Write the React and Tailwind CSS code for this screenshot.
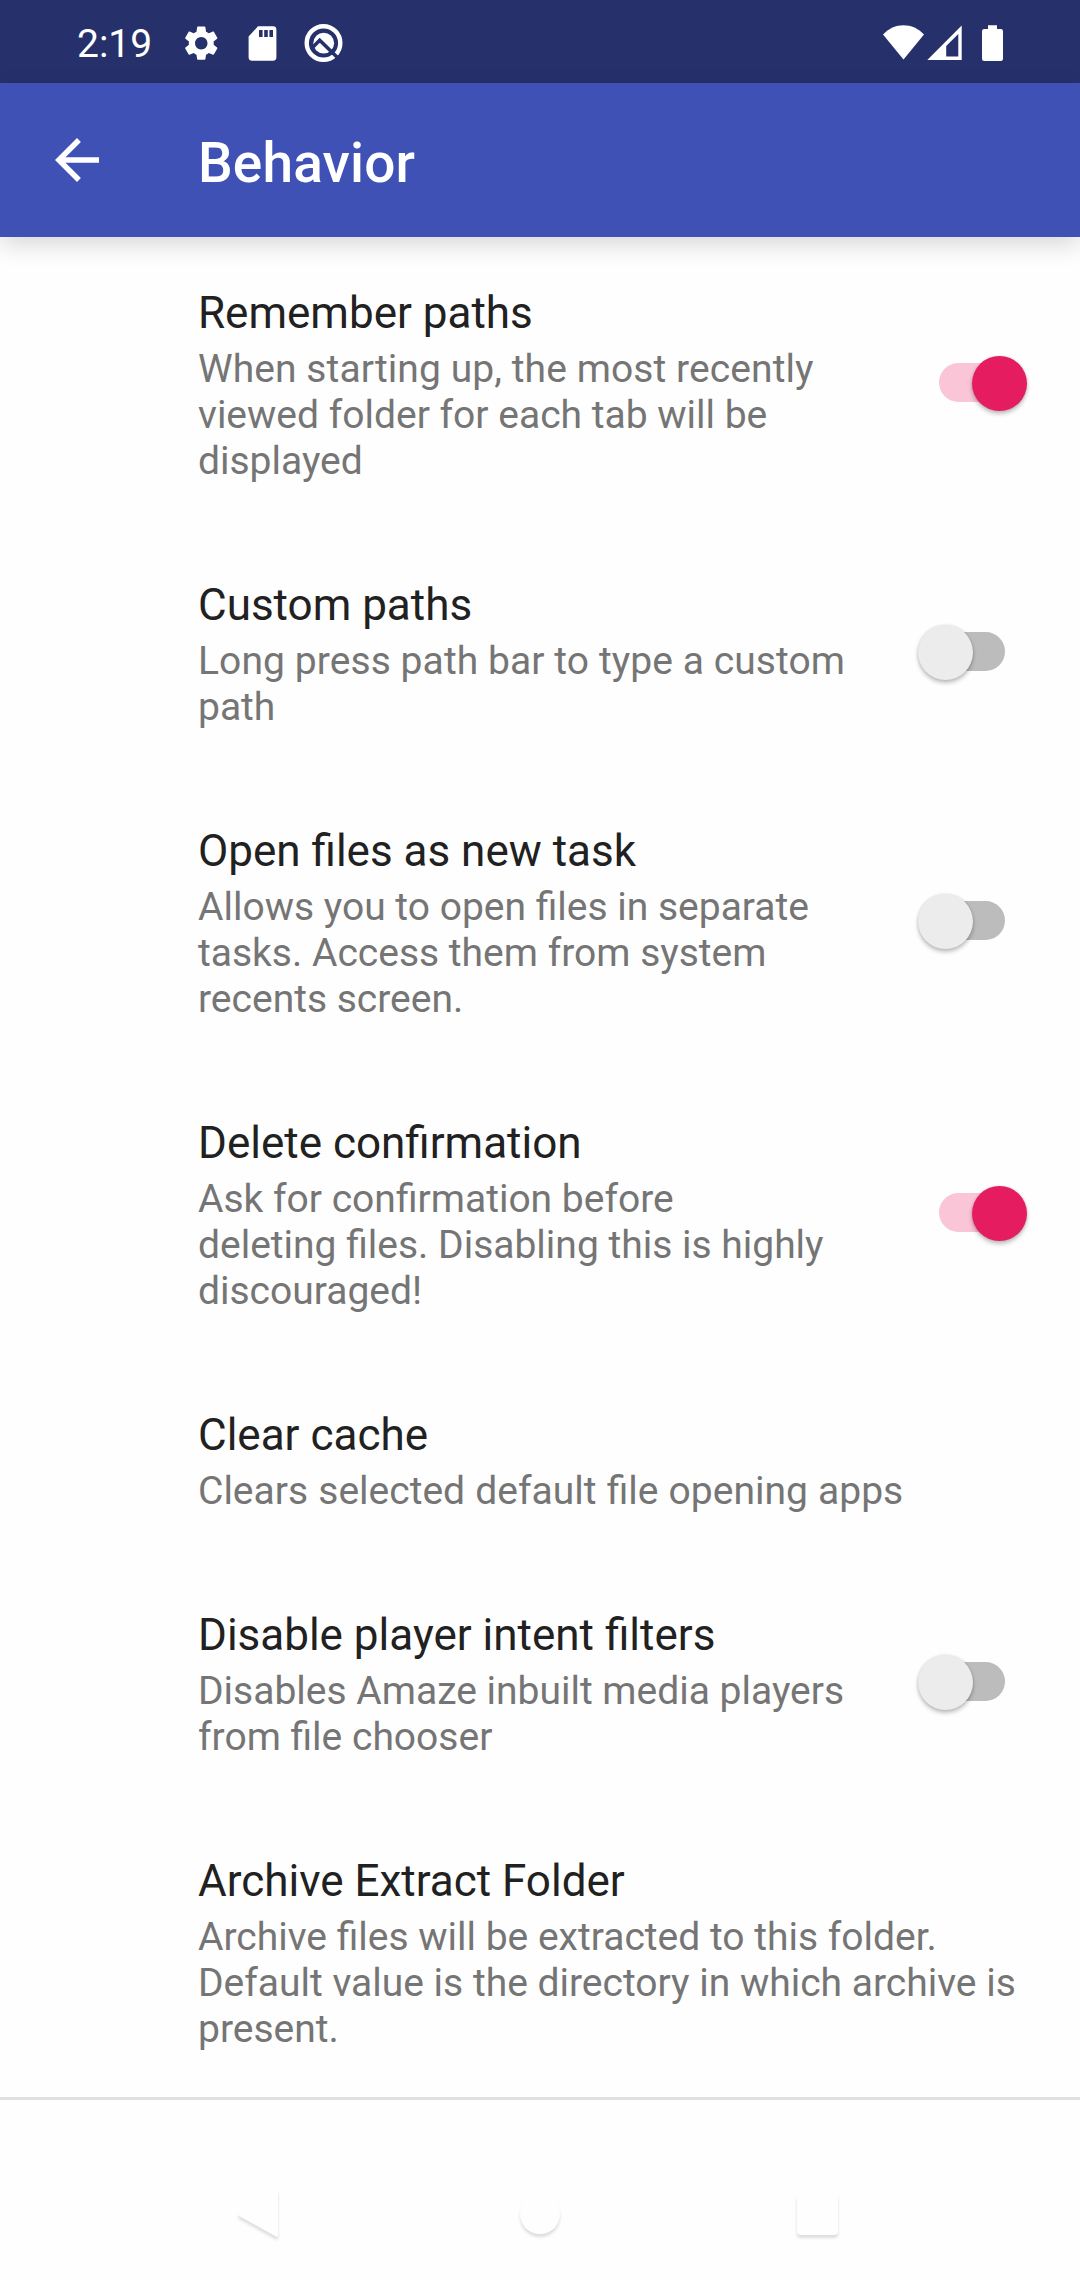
const items = [
  { title: "Remember paths", lines: ["When starting up, the most recently", "viewed folder for each tab will be", "displayed"], on: true, firstLine: "tracking-[0.08px]" },
  { title: "Custom paths", lines: ["Long press path bar to type a custom", "path"], on: false, firstLine: "tracking-[0.08px]" },
  { title: "Open files as new task", lines: ["Allows you to open files in separate", "tasks. Access them from system", "recents screen."], on: false },
  { title: "Delete confirmation", lines: ["Ask for confirmation before", "deleting files. Disabling this is highly", "discouraged!"], on: true },
  { title: "Clear cache", lines: ["Clears selected default file opening apps"], firstLine: "[word-spacing:0.5px]" },
  { title: "Disable player intent filters", lines: ["Disables Amaze inbuilt media players", "from file chooser"], on: false },
  { title: "Archive Extract Folder", lines: ["Archive files will be extracted to this folder.", "Default value is the directory in which archive is", "present."] },
];

function Switch({ on }) {
  return (
    <div className={`relative mb-px h-[39px] w-[66px] shrink-0 rounded-full ${on ? "bg-[#f9c5d7]" : "bg-[#bcbcbc]"}`}>
      <div
        className={`absolute -top-[7.5px] h-[55px] w-[55px] rounded-full shadow-[0_3px_4px_rgba(0,0,0,0.24),0_0_3px_rgba(0,0,0,0.12)] ${
          on ? "left-[32.5px] bg-[#e51d60]" : "-left-[21.5px] bg-[#ececec]"
        }`}
      />
    </div>
  );
}

function Row({ item }) {
  return (
    <div className="flex items-center justify-between pr-[75px] pl-[198px]">
      <div className="pt-[46px] pb-[45px] whitespace-nowrap">
        <div className="text-[44px] leading-[60px] text-[#212121]">{item.title}</div>
        <div className="mt-[3px] text-[39px] leading-[46px] text-[#757575]">
          {item.lines.map((l, i) => (
            <div key={l} className={i === 0 ? item.firstLine : undefined}>
              {l}
            </div>
          ))}
        </div>
      </div>
      {item.on !== undefined && <Switch on={item.on} />}
    </div>
  );
}

function StatusBar() {
  return (
    <div className="flex h-[83px] items-center bg-[#26306b] pl-[77px] text-white">
      <div className="w-[100px] text-[39px] leading-[46px] pt-[5px]">2:19</div>
      <svg className="h-[83px] w-[903px]" viewBox="177 0 903 83" fill="#fff">
        <g transform="translate(180.5 22.4) scale(1.73)">
          <path d="M19.14 12.94c.04-.3.06-.61.06-.94 0-.32-.02-.64-.07-.94l2.03-1.58c.18-.14.23-.41.12-.61l-1.92-3.32c-.12-.22-.37-.29-.59-.22l-2.39.96c-.5-.38-1.03-.7-1.62-.94l-.36-2.54c-.04-.24-.24-.41-.48-.41h-3.84c-.24 0-.43.17-.47.41l-.36 2.54c-.59.24-1.13.57-1.62.94l-2.39-.96c-.22-.08-.47 0-.59.22L2.74 8.87c-.12.21-.08.47.12.61l2.03 1.58c-.05.3-.09.63-.09.94s.02.64.07.94l-2.03 1.58c-.18.14-.23.41-.12.61l1.92 3.32c.12.22.37.29.59.22l2.39-.96c.5.38 1.03.7 1.62.94l.36 2.54c.05.24.24.41.48.41h3.84c.24 0 .44-.17.47-.41l.36-2.54c.59-.24 1.13-.56 1.62-.94l2.39.96c.22.08.47 0 .59-.22l1.92-3.32c.12-.22.07-.47-.12-.61l-2.01-1.58zM12 15.6c-1.98 0-3.6-1.62-3.6-3.6s1.62-3.6 3.6-3.6 3.6 1.62 3.6 3.6-1.62 3.6-3.6 3.6z" />
        </g>
        <path fillRule="evenodd" d="M258 26.3h15a3.4 3.4 0 0 1 3.4 3.4v27.6a3.4 3.4 0 0 1-3.4 3.4h-21a3.4 3.4 0 0 1-3.4-3.4V36.5zM259 30v7h3.6v-7zM264.2 30v7h3.6v-7zM269.4 30v7h3.6v-7z" />
        <circle cx="323.5" cy="43" r="16.8" fill="none" stroke="#fff" strokeWidth="4.4" />
        <circle cx="323.7" cy="43.2" r="10.4" />
        <path d="M312.5 47.5l7.2-7.2 18.5 18" fill="none" stroke="#26306b" strokeWidth="3.6" />
        <path d="M883 34.6C888.5 28.5 896 25.3 903.5 25.3S918.5 28.5 924 34.6L903.5 59.5z" />
        <path fillRule="evenodd" d="M961.7 25.5V60H927.3zM958.3 34L946.2 46V56.5H958.3z" />
        <path d="M988 25.3h9V29h3.8a2.2 2.2 0 0 1 2.2 2.2v27.5a2.2 2.2 0 0 1-2.2 2.2h-16.6a2.2 2.2 0 0 1-2.2-2.2V31.2a2.2 2.2 0 0 1 2.2-2.2h3.8z" />
      </svg>
    </div>
  );
}

export default function App() {
  return (
    <div className="flex h-[2280px] w-[1080px] flex-col overflow-hidden bg-[#fefefe] font-['Roboto',sans-serif]">
      <StatusBar />
      <header className="z-10 flex h-[154px] items-center bg-[#3f51b4] pl-[44px] text-white shadow-[0_8px_22px_rgba(0,0,0,0.15)]">
        <svg className="h-[66px] w-[66px]" viewBox="0 0 24 24" fill="#fff">
          <path d="M20 11H7.83l5.59-5.59L12 4l-8 8 8 8 1.41-1.41L7.83 13H20v-2z" />
        </svg>
        <h1 className="ml-[88px] pt-[6px] text-[55px] leading-[64px] font-medium tracking-[0.15px]">Behavior</h1>
      </header>
      <main>
        {items.map((item) => (
          <Row key={item.title} item={item} />
        ))}
        <hr className="h-[3px] border-0 bg-[#e0e0e0]" />
      </main>
      <nav className="mt-auto flex h-[132px]">
        <svg className="h-[132px] w-[1080px]" viewBox="0 2148 1080 132" fill="#fefefe">
          <g className="drop-shadow-[0_3px_1.5px_rgba(0,0,0,0.13)]">
            <path d="M239 2216Q237 2214 239 2212L275 2190Q278 2188 278 2192V2234Q278 2238 275 2236z" />
            <circle cx="540" cy="2214" r="20" />
            <rect x="797" y="2194" width="41" height="41" rx="4" />
          </g>
        </svg>
      </nav>
    </div>
  );
}
